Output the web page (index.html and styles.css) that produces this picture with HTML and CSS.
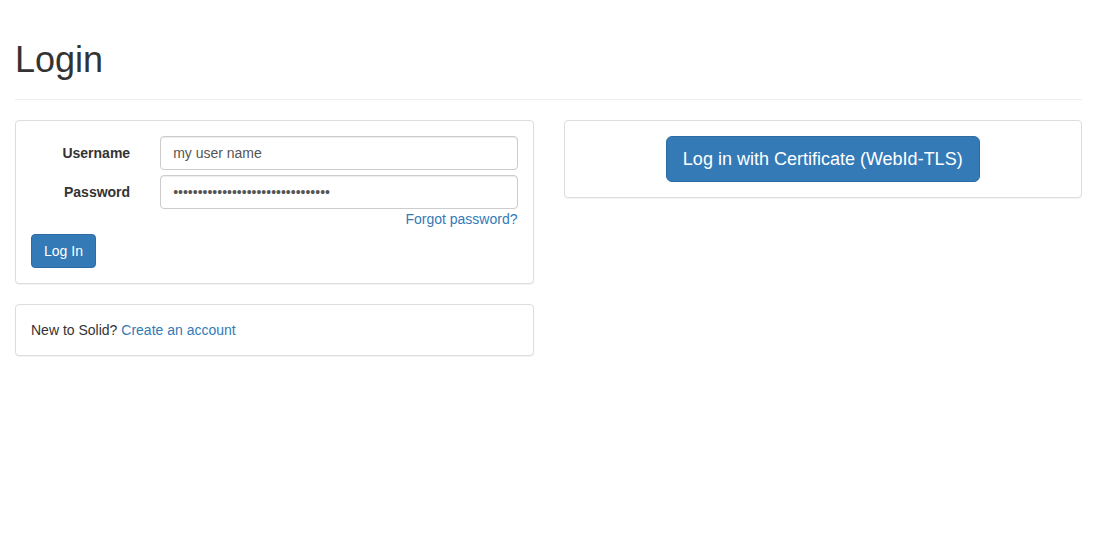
FILE: index.html
```html
<!DOCTYPE html>
<html lang="en">
<head>
<meta charset="utf-8">
<title>Login</title>
<link rel="stylesheet" href="styles.css">
</head>
<body>
<div class="container">
  <div class="page-header">
    <h1>Login</h1>
  </div>
  <div class="row">
    <div class="col">
      <div class="panel">
        <div class="panel-body">
          <form class="login-form">
            <div class="form-group first">
              <label class="control-label" for="username">Username</label>
              <div class="control">
                <input class="form-control" id="username" type="text" value="my user name">
              </div>
            </div>
            <div class="form-group second">
              <label class="control-label" for="password">Password</label>
              <div class="control">
                <input class="form-control" id="password" type="password" value="abcdefghijklmnopqrstuvwxyz123456">
                <div class="forgot"><a href="#">Forgot password?</a></div>
              </div>
            </div>
            <button type="button" class="btn btn-primary">Log In</button>
          </form>
        </div>
      </div>
      <div class="panel">
        <div class="panel-body">
          New to Solid? <a href="#">Create an account</a>
        </div>
      </div>
    </div>
    <div class="col">
      <div class="panel">
        <div class="panel-body center">
          <button type="button" class="btn btn-primary btn-lg">Log in with Certificate (WebId-TLS)</button>
        </div>
      </div>
    </div>
  </div>
</div>
</body>
</html>
```

FILE: styles.css
```css
* { box-sizing: border-box; }
html, body { margin: 0; padding: 0; }
body {
  font-family: "Liberation Sans", Arial, Helvetica, sans-serif;
  font-size: 14px;
  line-height: 1.42857143;
  color: #333;
  background: #fff;
}
a { color: #337ab7; text-decoration: none; }
.container { padding: 0 15px; }
.page-header {
  margin: 40px 0 20px;
  padding-bottom: 9px;
  border-bottom: 1px solid #eee;
}
.page-header h1 {
  margin: 0 0 10px;
  font-size: 36px;
  font-weight: 500;
  line-height: 1.1;
  color: #333;
}
.row {
  display: flex;
  margin: 0 -15px;
}
.col {
  flex: 0 0 50%;
  width: 50%;
  padding: 0 15px;
}
.panel {
  margin-bottom: 20px;
  background: #fff;
  border: 1px solid #ddd;
  border-radius: 4px;
  box-shadow: 0 1px 1px rgba(0,0,0,.05);
}
.panel-body { padding: 15px; }
.center { text-align: center; }
.form-group {
  display: flex;
  margin: 0 -15px;
}
.form-group.first { margin-bottom: 5px; }
.form-group.second { margin-bottom: 5px; }
.control-label {
  flex: 0 0 25%;
  padding: 7px 15px 0;
  text-align: right;
  font-weight: 700;
}
.control {
  flex: 0 0 75%;
  padding: 0 15px;
}
.form-control {
  display: block;
  width: 100%;
  height: 34px;
  padding: 6px 12px;
  font-family: inherit;
  font-size: 14px;
  line-height: 1.42857143;
  color: #555;
  background: #fff;
  border: 1px solid #ccc;
  border-radius: 4px;
  box-shadow: inset 0 1px 1px rgba(0,0,0,.075);
  outline: none;
}
.forgot { text-align: right; }
.btn {
  display: inline-block;
  padding: 6px 12px;
  font-family: inherit;
  font-size: 14px;
  line-height: 1.42857143;
  font-weight: 400;
  border: 1px solid transparent;
  border-radius: 4px;
  cursor: pointer;
  vertical-align: middle;
}
.btn-primary {
  color: #fff;
  background: #337ab7;
  border-color: #2e6da4;
}
.btn-lg {
  padding: 10px 16px;
  font-size: 18px;
  line-height: 1.3333333;
  border-radius: 6px;
}
```
